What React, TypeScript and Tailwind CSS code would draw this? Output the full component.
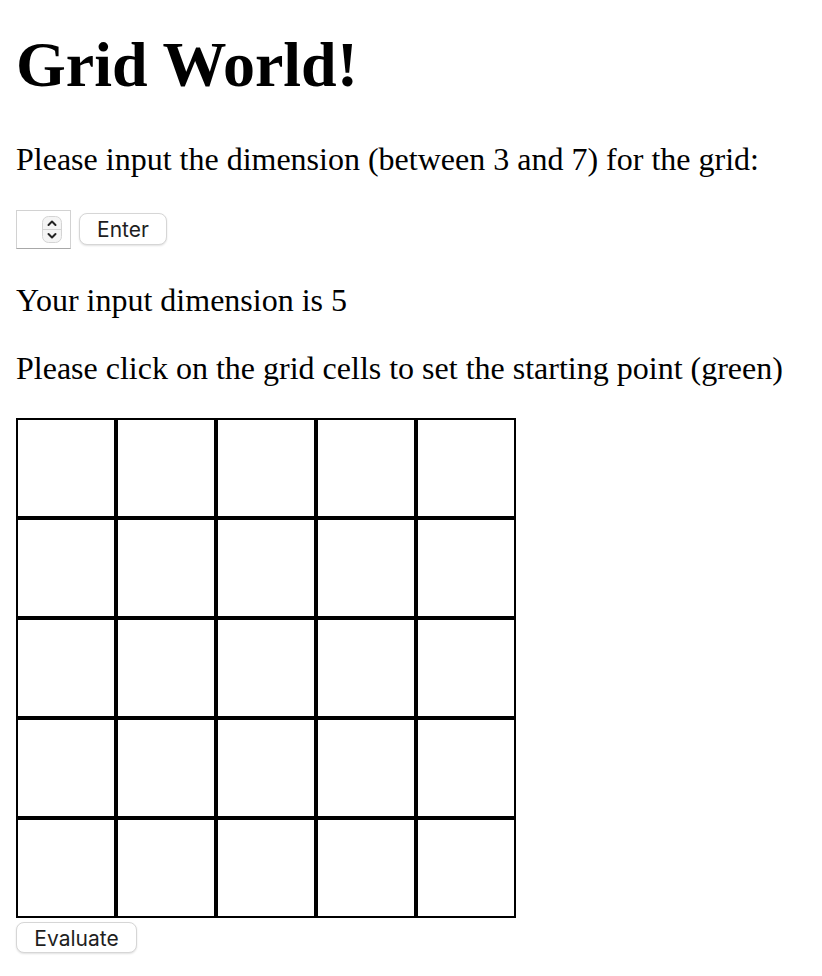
import React, { useState } from 'react';

const SIZE = 5;

const Spinner = () => (
  <svg width="20" height="27" viewBox="0 0 20 27" className="block">
    <rect x="0.5" y="0.5" width="19" height="26" rx="6" fill="#f4f4f4" stroke="#d4d4d4" />
    <line x1="1" y1="13.5" x2="19" y2="13.5" stroke="#d4d4d4" />
    <path d="M6.5 9 L10 5.5 L13.5 9" fill="none" stroke="#222" strokeWidth="2" strokeLinecap="round" strokeLinejoin="round" />
    <path d="M6.5 18 L10 21.5 L13.5 18" fill="none" stroke="#222" strokeWidth="2" strokeLinecap="round" strokeLinejoin="round" />
  </svg>
);

const App: React.FC = () => {
  const [start, setStart] = useState<number | null>(null);

  return (
    <div className="min-h-screen bg-white px-4 pt-[29px] text-black font-['Liberation_Serif','Times_New_Roman',serif]">
      <h1 className="m-0 text-[64px] font-bold leading-[71px]">Grid World!</h1>

      <p className="mt-[42px] text-[32px] leading-[35px]">
        Please input the dimension (between 3 and 7) for the grid:
      </p>

      {/* dimension input row */}
      <div className="mt-[32px] flex h-[40px] items-center gap-2">
        <div className="flex h-[39px] w-[55px] items-center justify-end border border-[#d2d2d2] border-b-[#a8a8a8] bg-white pr-[8px]">
          <Spinner />
        </div>
        <button className="h-[32px] w-[88px] rounded-[8px] border border-[#d6d6d6] bg-white text-[21px] text-[#1e1e1e] shadow-[0_1px_2px_rgba(0,0,0,0.12)] font-['Inter','Liberation_Sans',sans-serif]">
          Enter
        </button>
      </div>

      <p className="mt-[34px] text-[32px] leading-[35px]">Your input dimension is 5</p>
      <p className="mt-[33px] text-[32px] leading-[35px]">
        Please click on the grid cells to set the starting point (green)
      </p>

      <div className="mt-[32px] grid w-[500px] grid-cols-[repeat(5,100px)]">
        {Array.from({ length: SIZE * SIZE }).map((_, i) => (
          <div
            key={i}
            onClick={() => setStart(i)}
            className={`h-[100px] w-[100px] border-2 border-black ${start === i ? 'bg-green-500' : 'bg-white'}`}
          />
        ))}
      </div>

      <button className="mt-[4px] h-[31px] w-[121px] rounded-[8px] border border-[#d6d6d6] bg-white text-[21px] text-[#1e1e1e] shadow-[0_1px_2px_rgba(0,0,0,0.12)] font-['Inter','Liberation_Sans',sans-serif]">
        Evaluate
      </button>
    </div>
  );
};

export default App;
